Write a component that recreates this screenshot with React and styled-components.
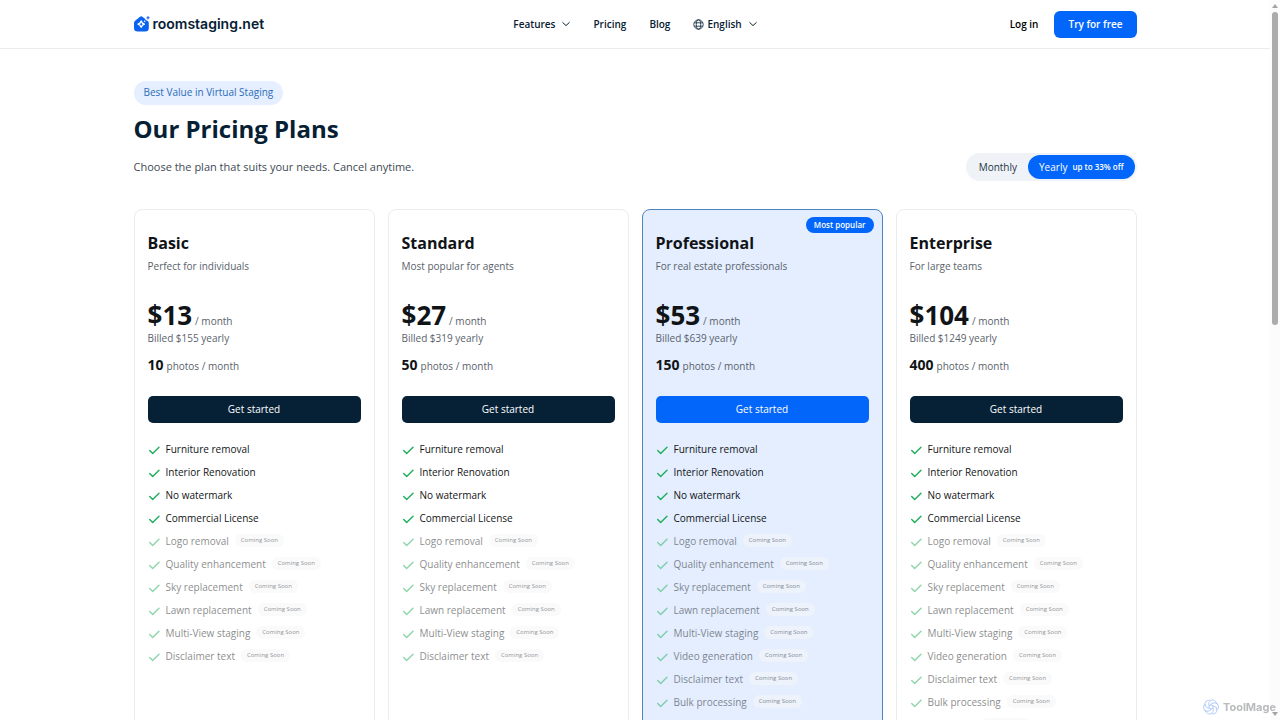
import React, { useState } from "react";
import styled, { createGlobalStyle, css } from "styled-components";

const plans = [
  {
    name: "Basic",
    description: "Perfect for individuals",
    price: 13,
    billed: 155,
    photos: 10,
    soon: [
      "Logo removal",
      "Quality enhancement",
      "Sky replacement",
      "Lawn replacement",
      "Multi-View staging",
      "Disclaimer text",
    ],
  },
  {
    name: "Standard",
    description: "Most popular for agents",
    price: 27,
    billed: 319,
    photos: 50,
    soon: [
      "Logo removal",
      "Quality enhancement",
      "Sky replacement",
      "Lawn replacement",
      "Multi-View staging",
      "Disclaimer text",
    ],
  },
  {
    name: "Professional",
    description: "For real estate professionals",
    price: 53,
    billed: 639,
    photos: 150,
    popular: true,
    soon: [
      "Logo removal",
      "Quality enhancement",
      "Sky replacement",
      "Lawn replacement",
      "Multi-View staging",
      "Video generation",
      "Disclaimer text",
      "Bulk processing",
    ],
  },
  {
    name: "Enterprise",
    description: "For large teams",
    price: 104,
    billed: 1249,
    photos: 400,
    soon: [
      "Logo removal",
      "Quality enhancement",
      "Sky replacement",
      "Lawn replacement",
      "Multi-View staging",
      "Video generation",
      "Disclaimer text",
      "Bulk processing",
      "API Access",
    ],
  },
];

const included = [
  "Furniture removal",
  "Interior Renovation",
  "No watermark",
  "Commercial License",
];

const Chevron = () => (
  <svg width="8" height="8" viewBox="0 0 8 8" fill="none" aria-hidden="true">
    <path d="M0.5 2.3 4 5.6 7.5 2.3" stroke="currentColor" strokeWidth="1" />
  </svg>
);

const Globe = () => (
  <svg
    width="11"
    height="11"
    viewBox="0 0 11 11"
    fill="none"
    stroke="currentColor"
    strokeWidth="0.8"
    aria-hidden="true"
  >
    <circle cx="5.5" cy="5.5" r="4.7" />
    <ellipse cx="5.5" cy="5.5" rx="2.2" ry="4.7" />
    <path d="M1.2 3.8h8.6M1.2 7.2h8.6" />
  </svg>
);

const Check = () => (
  <svg width="12" height="12" viewBox="0 0 12 12" fill="none" aria-hidden="true">
    <path
      d="M1.7 7.6 4.7 10.6 11 4.3"
      stroke="#1fae5b"
      strokeWidth="1.4"
      strokeLinecap="round"
      strokeLinejoin="round"
    />
  </svg>
);

const LogoMark = () => (
  <svg width="16" height="16" viewBox="0 0 16 16" aria-hidden="true">
    <path
      d="M5.7 0.9Q7.2-0.3 8.7 0.9L11 2.7Q11.4 4.2 12.9 4.4L14 5.3Q14.8 6 14.8 7V12Q14.8 15.6 11.2 15.6H3.6Q0 15.6 0 12V7Q0 5.6 1.1 4.7Z"
      fill="#0a62f0"
    />
    <path
      d="M7.2 5Q7.9 7.5 10.4 8.2Q7.9 8.9 7.2 11.4Q6.5 8.9 4 8.2Q6.5 7.5 7.2 5Z"
      fill="#0a62f0"
      stroke="#fff"
      strokeWidth="1.3"
      strokeLinejoin="round"
    />
    <circle cx="10.6" cy="5.3" r="0.8" fill="#fff" />
    <path
      d="M14 0.2Q14.3 1.4 15.6 1.8Q14.3 2.2 14 3.4Q13.6 2.2 12.4 1.8Q13.6 1.4 14 0.2Z"
      fill="#0a62f0"
      stroke="#0a62f0"
      strokeWidth="0.4"
    />
  </svg>
);

const MageMark = () => (
  <svg
    width="16"
    height="16"
    viewBox="0 0 16 16"
    fill="none"
    stroke="#afc9f6"
    strokeWidth="0.9"
    aria-hidden="true"
  >
    <circle cx="8" cy="8" r="2" />
    {[0, 60, 120, 180, 240, 300].map((angle) => (
      <path
        key={angle}
        d="M6 7.6Q4.4 3.4 8 1A4.4 4.4 0 0 1 13.6 4.6"
        transform={`rotate(${angle} 8 8)`}
      />
    ))}
  </svg>
);

const App = () => {
  const [yearly, setYearly] = useState(true);

  return (
    <Window>
      <GlobalStyle />
      <Page>
        <Header>
          <HeaderInner>
            <Logo href="#">
              <LogoMark />
              roomstaging.net
            </Logo>
            <Nav>
              <NavButton type="button">
                Features
                <Chevron />
              </NavButton>
              <NavLink href="#">Pricing</NavLink>
              <NavLink href="#">Blog</NavLink>
              <NavButton type="button">
                <Language>
                  <Globe />
                  English
                </Language>
                <Chevron />
              </NavButton>
            </Nav>
            <Account>
              <NavLink href="#">Log in</NavLink>
              <TryButton type="button">Try for free</TryButton>
            </Account>
          </HeaderInner>
        </Header>
        <Main>
          <Tagline>Best Value in Virtual Staging</Tagline>
          <Heading>Our Pricing Plans</Heading>
          <IntroRow>
            <Intro>Choose the plan that suits your needs. Cancel anytime.</Intro>
            <Toggle>
              <ToggleButton
                type="button"
                $active={!yearly}
                aria-pressed={!yearly}
                onClick={() => setYearly(false)}
              >
                Monthly
              </ToggleButton>
              <ToggleButton
                type="button"
                $active={yearly}
                aria-pressed={yearly}
                onClick={() => setYearly(true)}
              >
                Yearly
                <Discount>up to 33% off</Discount>
              </ToggleButton>
            </Toggle>
          </IntroRow>
          <Plans>
            {plans.map((plan) => (
              <Card key={plan.name} $popular={plan.popular}>
                {plan.popular && <PopularBadge>Most popular</PopularBadge>}
                <PlanName>{plan.name}</PlanName>
                <Note>{plan.description}</Note>
                <PriceRow>
                  <Price>${plan.price}</Price>
                  <Unit>/ month</Unit>
                </PriceRow>
                <Note>Billed ${plan.billed} yearly</Note>
                <PhotosRow>
                  <Photos>{plan.photos}</Photos>
                  <Unit>photos / month</Unit>
                </PhotosRow>
                <StartButton type="button" $popular={plan.popular}>
                  Get started
                </StartButton>
                <Features>
                  {included.map((feature) => (
                    <Feature key={feature}>
                      <Check />
                      {feature}
                    </Feature>
                  ))}
                  {plan.soon.map((feature) => (
                    <Feature key={feature} $soon>
                      <Check />
                      {feature}
                      <SoonBadge>Coming Soon</SoonBadge>
                    </Feature>
                  ))}
                </Features>
              </Card>
            ))}
          </Plans>
        </Main>
      </Page>
      <Scrollbar aria-hidden="true">
        <Arrow viewBox="0 0 6 4">
          <path d="M3 0 6 4H0Z" />
        </Arrow>
        <Track>
          <Thumb />
        </Track>
        <Arrow viewBox="0 0 6 4">
          <path d="M0 0H6L3 4Z" />
        </Arrow>
      </Scrollbar>
      <Watermark>
        <MageMark />
        ToolMage
      </Watermark>
    </Window>
  );
};

const GlobalStyle = createGlobalStyle`
  * {
    box-sizing: border-box;
  }
  body {
    margin: 0;
    background: #fff;
    color: #111417;
    font-family: "Open Sans", "Noto Sans", sans-serif;
    font-size: 10px;
    line-height: 16px;
  }
  h1, h2, p, ul {
    margin: 0;
    padding: 0;
  }
  button {
    border: none;
    background: none;
    padding: 0;
    color: inherit;
    font: inherit;
    cursor: pointer;
  }
  a {
    color: inherit;
    text-decoration: none;
  }
  svg {
    flex: none;
  }
`;

const Window = styled.div`
  display: grid;
  grid-template-columns: minmax(0, 1fr) 10px;
  height: 100vh;
`;

const Page = styled.div`
  overflow-y: auto;
  scrollbar-width: none;
`;

const Header = styled.header`
  border-bottom: 1px solid #ebecee;
`;

const HeaderInner = styled.div`
  display: grid;
  grid-template-columns: 1fr auto 1fr;
  align-items: center;
  max-width: 1003px;
  height: 48px;
  margin: 0 auto;
`;

const Logo = styled.a`
  display: flex;
  align-items: center;
  gap: 3px;
  color: #062033;
  font-family: Inter, sans-serif;
  font-size: 14px;
  font-weight: 600;
`;

const Nav = styled.nav`
  display: flex;
  align-items: center;
  gap: 23px;
  color: #062033;
`;

const NavLink = styled.a`
  font-weight: 600;
`;

const NavButton = styled.button`
  display: flex;
  align-items: center;
  gap: 7px;
  font-weight: 600;
`;

const Language = styled.span`
  display: flex;
  align-items: center;
  gap: 3px;
`;

const Account = styled.div`
  display: flex;
  align-items: center;
  justify-content: flex-end;
  gap: 16px;
  color: #000;
`;

const TryButton = styled.button`
  height: 27px;
  padding: 0 14px;
  border-radius: 6px;
  background: #0366fb;
  color: #fff;
  font-weight: 600;
`;

const Main = styled.main`
  max-width: 1003px;
  margin: 0 auto;
  padding: 32px 0;
`;

const Tagline = styled.span`
  display: inline-block;
  padding: 3px 10px 5px;
  border-radius: 12px;
  background: #e5efff;
  color: #2a6cb8;
`;

const Heading = styled.h1`
  margin-top: 8px;
  color: #062033;
  font-size: 24px;
  font-weight: 700;
  line-height: 32px;
`;

const IntroRow = styled.div`
  display: flex;
  align-items: center;
  justify-content: space-between;
  margin-top: 8px;
`;

const Intro = styled.p`
  color: #414a54;
  font-size: 11px;
`;

const Toggle = styled.div`
  display: flex;
  padding: 2px;
  border-radius: 14px;
  background: #eff3f8;
`;

const ToggleButton = styled.button`
  display: flex;
  align-items: center;
  gap: 5px;
  height: 24px;
  padding: 0 11px;
  border-radius: 12px;
  color: #26333f;
  ${({ $active }) =>
    $active &&
    css`
      background: #0366fb;
      color: #fff;
    `}
`;

const Discount = styled.span`
  font-size: 8px;
  font-weight: 600;
`;

const Plans = styled.section`
  display: grid;
  grid-template-columns: repeat(4, minmax(0, 1fr));
  gap: 13px;
  margin-top: 28px;
`;

const Card = styled.article`
  position: relative;
  padding: 21px 13px 24px;
  border: 1px solid ${({ $popular }) => ($popular ? "#4d86bd" : "#ebecee")};
  border-radius: 8px;
  background: ${({ $popular }) => ($popular ? "#e4eeff" : "#fff")};
`;

const PopularBadge = styled.span`
  position: absolute;
  top: 7px;
  right: 8px;
  padding: 0 8px;
  border-radius: 8px;
  background: #0366fb;
  color: #fff;
  font-size: 8px;
  font-weight: 600;
`;

const PlanName = styled.h2`
  margin-bottom: 3px;
  font-size: 16px;
  font-weight: 700;
  line-height: 24px;
`;

const Note = styled.p`
  color: #59626c;
`;

const PriceRow = styled.div`
  display: flex;
  align-items: baseline;
  gap: 3px;
  margin-top: 26px;
`;

const Price = styled.strong`
  font-size: 26px;
  font-weight: 700;
  line-height: 30px;
`;

const Unit = styled.span`
  color: #59626c;
`;

const PhotosRow = styled.div`
  display: flex;
  align-items: baseline;
  gap: 3px;
  margin-top: 9px;
`;

const Photos = styled.strong`
  font-size: 14px;
  font-weight: 700;
  line-height: 20px;
`;

const StartButton = styled.button`
  width: 100%;
  height: 27px;
  margin-top: 21px;
  padding-bottom: 2px;
  border-radius: 5px;
  background: ${({ $popular }) => ($popular ? "#0366fb" : "#062136")};
  color: #fff;
  font-weight: 500;
`;

const Features = styled.ul`
  margin-top: 14px;
  list-style: none;
`;

const Feature = styled.li`
  display: flex;
  align-items: center;
  gap: 6px;
  height: 23px;
  opacity: ${({ $soon }) => ($soon ? 0.5 : 1)};
`;

const SoonBadge = styled.span`
  padding: 0 6px;
  border-radius: 6px;
  background: #f6f7f8;
  color: #20262c;
  font-size: 6px;
  line-height: 13px;
`;

const Scrollbar = styled.div`
  display: flex;
  flex-direction: column;
  align-items: center;
  gap: 4px;
  padding: 4px 0;
  background: #fcfcfc;
`;

const Arrow = styled.svg`
  width: 6px;
  height: 4px;
  fill: #a3a3a3;
`;

const Track = styled.div`
  flex: 1;
  width: 6px;
`;

const Thumb = styled.div`
  height: 45%;
  border-radius: 3px;
  background: #acacac;
`;

const Watermark = styled.div`
  position: fixed;
  right: 4px;
  bottom: 5px;
  display: flex;
  align-items: center;
  gap: 4px;
  color: #b9babc;
  font-family: Inter, sans-serif;
  font-size: 11px;
  font-weight: 700;
`;

export default App;
